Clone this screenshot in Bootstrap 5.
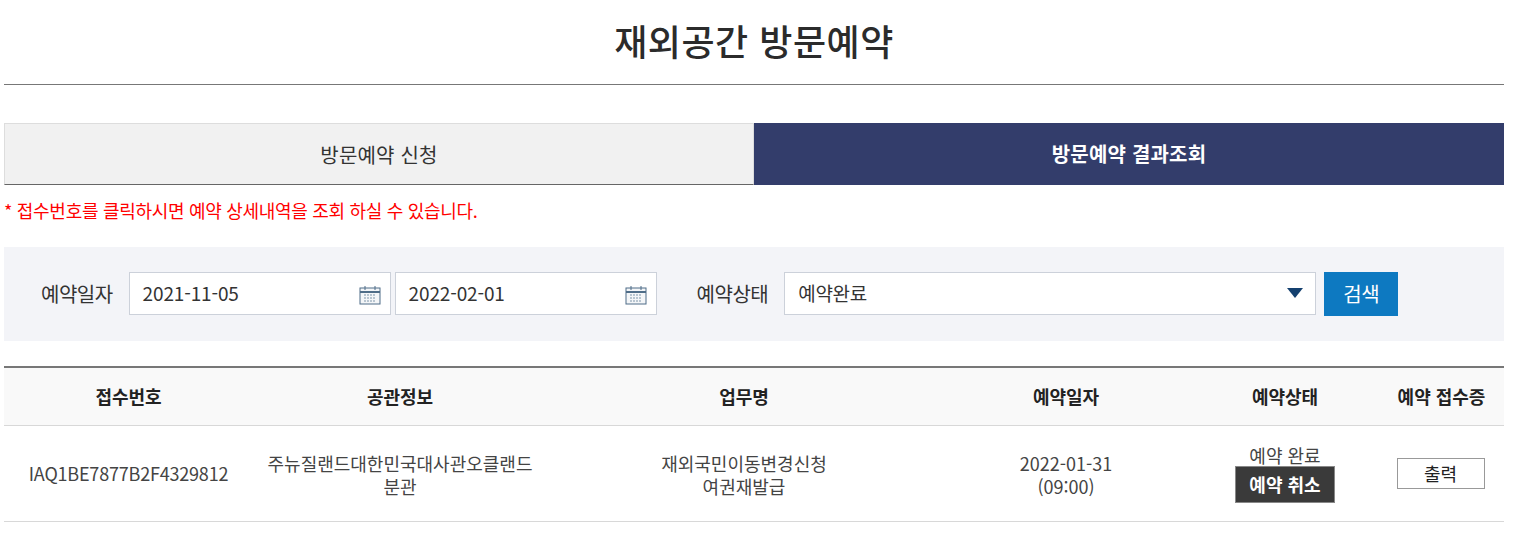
<!DOCTYPE html>
<html lang="ko">
<head>
    <meta charset="UTF-8">
    <meta name="viewport" content="width=device-width, initial-scale=1.0">
    <title>재외공관 방문예약</title>
    <link href="https://cdn.jsdelivr.net/npm/bootstrap@5.3.0/dist/css/bootstrap.min.css" rel="stylesheet">
    <script src="https://cdn.jsdelivr.net/npm/bootstrap@5.3.0/dist/js/bootstrap.bundle.min.js"></script>
    <style>
        body { font-family: "Noto Sans CJK KR", "Liberation Sans", sans-serif; color: #333; font-size: 18px; }
        .page-wrap { width: 1500px; margin-left: 4px; }
        .page-title { height: 85px; margin: 0; border-bottom: 1px solid #777; font-size: 36px; font-weight: 500; line-height: 80px; letter-spacing: 0.5px; color: #2b2b2b; text-align: center; }
        .tab-bar { margin-top: 38px; height: 62px; }
        .tab-item { flex: 1 1 50%; font-size: 20px; line-height: 62px; letter-spacing: 0.2px; text-align: center; }
        .tab-off { background: #f1f1f1; border: 1px solid #ddd; border-bottom: 1px solid #666; color: #333; line-height: 61px; }
        .tab-on { background: #333d6b; color: #fff; font-weight: 700; }
        .notice-red { height: 62px; margin: 0; padding-top: 12px; font-size: 18px; line-height: 26px; color: #f00; letter-spacing: -0.3px; }
        .search-panel { height: 94px; padding: 25px 0 0 37px; background: #f3f4f8; align-items: flex-start; }
        .field-label { font-size: 20px; letter-spacing: -0.5px; line-height: 43px; margin-right: 16px; white-space: nowrap; }
        .date-box { width: 262px; height: 43px; margin-right: 4px; padding: 0 9px 2px 13px; background: #fff; border: 1px solid #ccd1da; font-size: 19px; line-height: 39px; letter-spacing: -0.15px; justify-content: space-between; align-items: center; }
        .date-box svg { margin-top: 5px; }
        .label-gap { margin-left: 36px; }
        .select-box { width: 532px; height: 43px; padding: 0 12px 2px 13px; background: #fff; border: 1px solid #ccd1da; line-height: 39px; font-size: 19px; letter-spacing: -0.3px; justify-content: space-between; align-items: center; }
        .select-arrow { width: 0; height: 0; margin-top: 1px; border-left: 8px solid transparent; border-right: 8px solid transparent; border-top: 10px solid #14406f; }
        .search-btn { width: 74px; height: 44px; margin-left: 8px; padding: 0; background: #0d79c1; border: 0; border-radius: 0; color: #fff; font-size: 20px; letter-spacing: -0.5px; }
        .result-table { width: 1500px; margin-top: 25px; table-layout: fixed; border-collapse: collapse; border-top: 2px solid #777; text-align: center; }
        .result-table th { height: 58px; padding: 0; background: #f9f9f9; border-bottom: 1px solid #d8d8d8; font-size: 18px; font-weight: 700; color: #222; }
        .result-table td { height: 96px; padding: 0; border-bottom: 1px solid #d8d8d8; line-height: 23px; color: #444; }
        .result-table td.two-line { padding-top: 3px; }
        .result-table td.code-cell { letter-spacing: -0.2px; }
        .status-text { display: block; line-height: 24px; }
        .cancel-btn { display: block; width: 100px; height: 37px; margin: -1px auto 0; padding: 0; background: #3a3a3a; border: 1px solid #888; border-radius: 0; color: #fff; font-size: 18px; font-weight: 700; line-height: 33px; letter-spacing: 0; }
        .print-btn { width: 88px; height: 31px; margin-right: 2px; padding: 0; background: #fff; border: 1px solid #999; border-radius: 0; color: #222; font-size: 18px; line-height: 28px; letter-spacing: 0; }
    </style>
</head>
<body>
    <div class="page-wrap">
        <h1 class="page-title">재외공간 방문예약</h1>

        <div class="tab-bar d-flex">
            <div class="tab-item tab-off">방문예약 신청</div>
            <div class="tab-item tab-on">방문예약 결과조회</div>
        </div>
        <p class="notice-red">* 접수번호를 클릭하시면 예약 상세내역을 조회 하실 수 있습니다.</p>

        <div class="search-panel d-flex">
            <span class="field-label">예약일자</span>
            <div class="date-box d-flex">2021-11-05
                <svg width="22" height="20" viewBox="0 0 22 20"><rect x="1" y="3" width="20" height="16" fill="#f4f6f8" stroke="#4f6d88"/><path d="M1 7h20" stroke="#4f6d88" stroke-width="2"/><path d="M6 1v4M16 1v4" stroke="#4f6d88"/><path d="M5 10h12M5 13h12M5 16h12" stroke="#7f96aa" stroke-dasharray="2 1"/></svg>
            </div>
            <div class="date-box d-flex">2022-02-01
                <svg width="22" height="20" viewBox="0 0 22 20"><rect x="1" y="3" width="20" height="16" fill="#f4f6f8" stroke="#4f6d88"/><path d="M1 7h20" stroke="#4f6d88" stroke-width="2"/><path d="M6 1v4M16 1v4" stroke="#4f6d88"/><path d="M5 10h12M5 13h12M5 16h12" stroke="#7f96aa" stroke-dasharray="2 1"/></svg>
            </div>
            <span class="field-label label-gap">예약상태</span>
            <div class="select-box d-flex">예약완료<span class="select-arrow"></span></div>
            <button class="btn search-btn" type="button">검색</button>
        </div>

        <table class="result-table">
            <colgroup>
                <col style="width:249px"><col style="width:294px"><col style="width:394px"><col style="width:250px"><col style="width:188px"><col style="width:125px">
            </colgroup>
            <thead>
                <tr><th>접수번호</th><th>공관정보</th><th>업무명</th><th>예약일자</th><th>예약상태</th><th>예약 접수증</th></tr>
            </thead>
            <tbody>
                <tr>
                    <td class="code-cell">IAQ1BE7877B2F4329812</td>
                    <td class="two-line">주뉴질랜드대한민국대사관오클랜드<br>분관</td>
                    <td class="two-line">재외국민이동변경신청<br>여권재발급</td>
                    <td class="two-line">2022-01-31<br>(09:00)</td>
                    <td><span class="status-text">예약 완료</span><button class="btn cancel-btn" type="button">예약 취소</button></td>
                    <td><button class="btn print-btn" type="button">출력</button></td>
                </tr>
            </tbody>
        </table>
    </div>
</body>
</html>
